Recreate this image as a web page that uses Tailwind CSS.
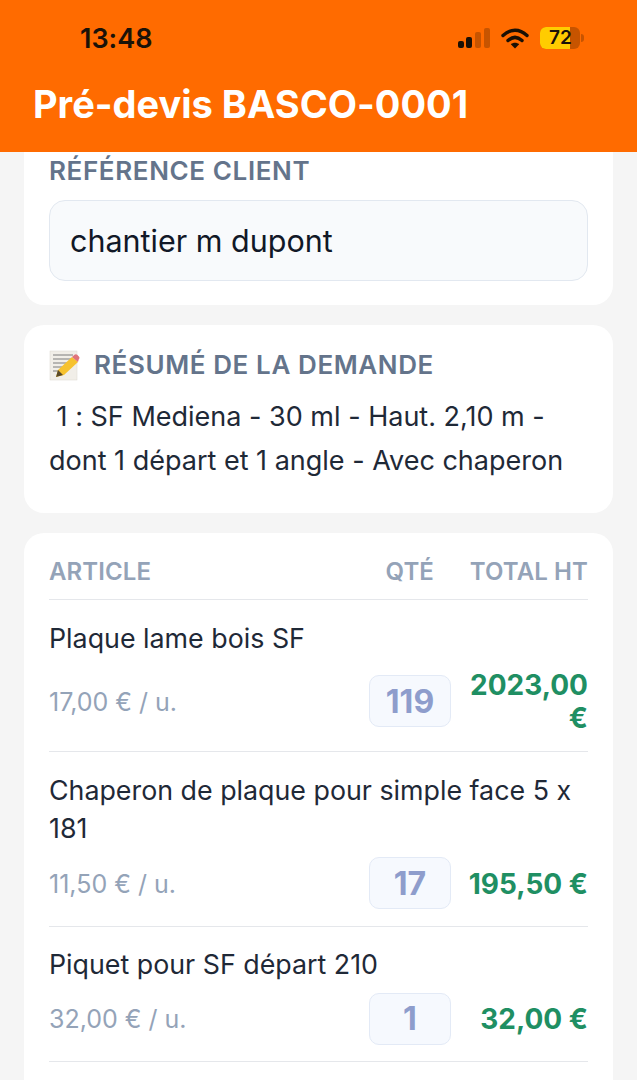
<!DOCTYPE html>
<html lang="fr">
<head>
<meta charset="utf-8">
<script src="https://cdn.jsdelivr.net/npm/@tailwindcss/browser@4"></script>
</head>
<body class="m-0">
<div class="w-[637px] h-[1080px] overflow-hidden bg-[#f5f5f5] font-['Inter',sans-serif] [font-feature-settings:'calt'_0]">
  <header class="h-[152px] bg-[#ff6b00] flex flex-col pl-[33px] pr-[53px]">
    <div class="h-[76px] flex items-center justify-between pl-[47px]">
      <span class="text-[27px] font-semibold text-[#1a1208] leading-none">13:48</span>
      <div class="flex items-center">
        <svg width="34" height="22" viewBox="0 0 34 22" class="mr-[10px]">
          <rect x="1" y="14" width="6" height="7" rx="2" fill="#1a1005"/>
          <rect x="9" y="10" width="6" height="11" rx="2" fill="#1a1005"/>
          <rect x="18" y="5" width="6" height="16" rx="2" fill="#c75400"/>
          <rect x="27" y="1" width="6" height="20" rx="2" fill="#c75400"/>
        </svg>
        <svg width="28" height="21" viewBox="0 0 28 21" class="mr-[11px]">
          <path d="M2 7.5C9.5 0.5 18.5 0.5 26 7.5" fill="none" stroke="#1a1005" stroke-width="3.4" stroke-linecap="round"/>
          <path d="M7 12.5C11.5 8.5 16.5 8.5 21 12.5" fill="none" stroke="#1a1005" stroke-width="3.4" stroke-linecap="round"/>
          <path d="M14 20.5L9.8 16.2C12.2 14.2 15.8 14.2 18.2 16.2Z" fill="#1a1005"/>
        </svg>
        <div class="relative w-[44px] h-[22px] flex items-center">
          <div class="w-[40px] h-[22px] rounded-[6px] bg-[#c75400] overflow-hidden">
            <div class="w-[30px] h-full bg-[#ffcc00]"></div>
          </div>
          <div class="w-[3px] h-[8px] ml-[1px] rounded-r-sm bg-[#c75400]"></div>
          <span class="absolute left-[9px] top-0 text-[19px] leading-[22px] font-semibold text-[#1a1208]">72</span>
        </div>
      </div>
    </div>
    <h1 class="text-[38px] font-bold text-white leading-none mt-[9px]">Pré-devis BASCO-0001</h1>
  </header>

  <main class="px-[24px] flex flex-col gap-[20px]">
    <section class="bg-white rounded-b-[20px] px-[25px] pb-[24px]">
      <div class="pt-[4px] text-[26px] leading-[30px] font-semibold uppercase tracking-[0.62px] text-[#64748b]">Référence client</div>
      <div class="mt-[14px] h-[81px] rounded-[16px] bg-[#f8fafc] border border-[#e2e8f0] flex items-center px-[20px] text-[30.5px] text-[#111827]">chantier m dupont</div>
    </section>

    <section class="bg-white rounded-[20px] px-[25px] pt-[25px] h-[188px]">
      <div class="flex items-center gap-[14px] h-[30px]">
        <svg width="31" height="31" viewBox="0 0 31 31">
          <rect x="1" y="1" width="27" height="29" fill="#f1eee8" stroke="#dcd8d0" stroke-width="0.5"/>
          <g stroke="#7d7d7d" stroke-width="1">
            <path d="M4 5h20M4 9h18M4 13h15M4 17h11M4 21h7"/>
          </g>
          <path d="M7 27l2-7L23 7l6 5L15 25z" fill="#f6c22f"/>
          <path d="M23 7l2.5-2.2a2 2 0 0 1 2.7 0l1.7 1.6a2 2 0 0 1 0 2.7L29 12z" fill="#e0737b"/>
          <path d="M7 27l2-7 5 5z" fill="#5a4a2a"/>
        </svg>
        <span class="text-[26px] leading-[30px] font-semibold uppercase tracking-[0.6px] text-[#64748b]">Résumé de la demande</span>
      </div>
      <p class="mt-[15px] text-[27px] leading-[44px] text-[#1f2937]">&nbsp;1 : SF Mediena - 30 ml - Haut. 2,10 m - dont 1 départ et 1 angle - Avec chaperon</p>
    </section>

    <section class="bg-white rounded-t-[20px] px-[25px] h-[600px]">
      <div class="h-[67px] pt-[12px] border-b border-[#e5e7eb] flex items-center text-[24px] font-semibold uppercase tracking-[0.1px] text-[#94a3b8]">
        <span class="flex-1">Article</span>
        <span>Qté</span>
        <span class="w-[154px] text-right">Total HT</span>
      </div>

      <div class="h-[152px] border-b border-[#e5e7eb] pt-[19px]">
        <div class="text-[26.8px] leading-[38px] text-[#1f2937]">Plaque lame bois SF</div>
        <div class="mt-[10px] flex items-center justify-between">
          <span class="flex-1 pt-[4px] text-[25px] text-[#94a3b8]">17,00 € / u.</span>
          <div class="w-[82px] h-[52px] rounded-[10px] bg-[#f6f9fe] border border-[#e3eaf6] flex items-center justify-center pt-[2px] text-[32px] font-bold text-[#8e9dcc]">119</div>
          <div class="w-[137px] pt-[2px] text-right text-[28px] leading-[33px] font-bold text-[#1f8f63]">2023,00 €</div>
        </div>
      </div>

      <div class="h-[175px] border-b border-[#e5e7eb] pt-[19px]">
        <div class="text-[26.8px] leading-[38px] text-[#1f2937]">Chaperon de plaque pour simple face 5 x 181</div>
        <div class="mt-[10px] flex items-center justify-between">
          <span class="flex-1 pt-[4px] text-[25px] text-[#94a3b8]">11,50 € / u.</span>
          <div class="w-[82px] h-[52px] rounded-[10px] bg-[#f6f9fe] border border-[#e3eaf6] flex items-center justify-center pt-[2px] text-[32px] font-bold text-[#8e9dcc]">17</div>
          <div class="w-[137px] pt-[2px] text-right text-[28px] leading-[33px] font-bold text-[#1f8f63]">195,50 €</div>
        </div>
      </div>

      <div class="h-[135px] border-b border-[#e5e7eb] pt-[18px]">
        <div class="text-[26.8px] leading-[38px] text-[#1f2937]">Piquet pour SF départ 210</div>
        <div class="mt-[10px] flex items-center justify-between">
          <span class="flex-1 pt-[2px] text-[25px] text-[#94a3b8]">32,00 € / u.</span>
          <div class="w-[82px] h-[52px] rounded-[10px] bg-[#f6f9fe] border border-[#e3eaf6] flex items-center justify-center text-[32px] font-bold text-[#8e9dcc]">1</div>
          <div class="w-[137px] text-right text-[28px] leading-[33px] font-bold text-[#1f8f63]">32,00 €</div>
        </div>
      </div>
    </section>
  </main>
</div>
</body>
</html>
